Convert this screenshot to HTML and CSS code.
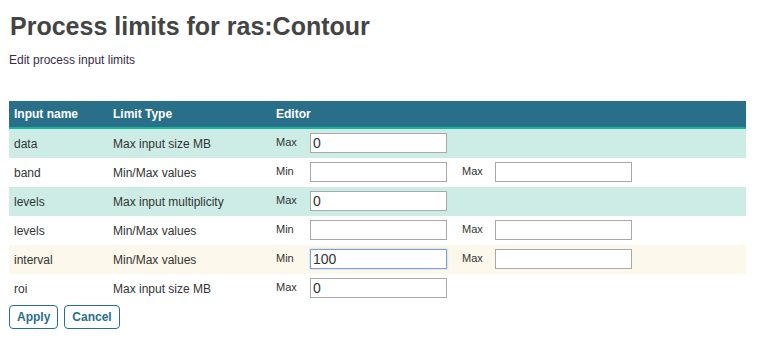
FILE: index.html
```html
<!DOCTYPE html>
<html lang="en">
<head>
    <meta charset="UTF-8">
    <meta name="viewport" content="width=device-width, initial-scale=1.0">
    <title>Process limits</title>
    <link rel="stylesheet" href="styles.css">
</head>
<body>
    <h1>Process limits for ras:Contour</h1>
    <p class="subtitle">Edit process input limits</p>

    <table class="limits">
        <thead>
            <tr>
                <th class="col-name">Input name</th>
                <th class="col-type">Limit Type</th>
                <th>Editor</th>
            </tr>
        </thead>
        <tbody>
            <tr class="odd">
                <td>data</td>
                <td>Max input size MB</td>
                <td><div class="editor"><span class="lbl">Max</span><input type="text" value="0"></div></td>
            </tr>
            <tr>
                <td>band</td>
                <td>Min/Max values</td>
                <td><div class="editor"><span class="lbl">Min</span><input type="text"><span class="lbl second">Max</span><input type="text"></div></td>
            </tr>
            <tr class="odd">
                <td>levels</td>
                <td>Max input multiplicity</td>
                <td><div class="editor"><span class="lbl">Max</span><input type="text" value="0"></div></td>
            </tr>
            <tr>
                <td>levels</td>
                <td>Min/Max values</td>
                <td><div class="editor"><span class="lbl">Min</span><input type="text"><span class="lbl second">Max</span><input type="text"></div></td>
            </tr>
            <tr class="hover">
                <td>interval</td>
                <td>Min/Max values</td>
                <td><div class="editor"><span class="lbl">Min</span><input type="text" class="focus" value="100"><span class="lbl second">Max</span><input type="text"></div></td>
            </tr>
            <tr>
                <td>roi</td>
                <td>Max input size MB</td>
                <td><div class="editor"><span class="lbl">Max</span><input type="text" value="0"></div></td>
            </tr>
        </tbody>
    </table>

    <div class="buttons">
        <button>Apply</button>
        <button>Cancel</button>
    </div>
</body>
</html>
```

FILE: styles.css
```css
body {
    font-family: "Liberation Sans", Arial, sans-serif;
    font-size: 12px;
    color: #333;
    margin: 9px;
}
h1 {
    font-size: 25px;
    color: #444;
    margin: 3px 0 0 1px;
    line-height: 28px;
}
.subtitle {
    margin: 12px 0 0 0;
    line-height: 16px;
    color: #3a2b45;
}
.limits {
    margin-top: 33px;
    width: 737px;
    border-collapse: collapse;
}
.limits th {
    background-color: #2a6f8a;
    color: #fff;
    text-align: left;
    font-weight: bold;
    height: 26px;
    padding: 0 5px;
    border-bottom: 2px solid #17b59a;
}
.col-name {
    width: 89px;
}
.col-type {
    width: 153px;
}
.limits td {
    height: 29px;
    padding: 0 5px;
    vertical-align: middle;
}
.limits tr.odd td {
    background-color: #cdece6;
}
.limits tr.hover td {
    background-color: #fdf8ec;
}
.editor {
    display: flex;
    align-items: flex-start;
    height: 29px;
}
.lbl {
    width: 34px;
    font-size: 11px;
    line-height: 14px;
    margin-top: 6px;
}
.lbl.second {
    margin-left: 15px;
    width: 33px;
}
input {
    width: 137px;
    height: 20px;
    box-sizing: border-box;
    border: 1px solid #a9a9a9;
    padding: 0 2px;
    font-family: "Liberation Sans", Arial, sans-serif;
    font-size: 14px;
    color: #333;
    margin: 4px 0 0 0;
}
input.focus {
    border-color: #7da2ce;
    box-shadow: 0 0 2px #a8c4ea;
    outline: none;
}
.buttons {
    margin-top: 2px;
    display: flex;
    gap: 6px;
}
button {
    font-family: "Liberation Sans", Arial, sans-serif;
    font-size: 12px;
    font-weight: bold;
    color: #2a6f8a;
    background: #fff;
    border: 1px solid #2a6f8a;
    border-radius: 4px;
    height: 24px;
    padding: 0 7px;
    cursor: pointer;
}
```
